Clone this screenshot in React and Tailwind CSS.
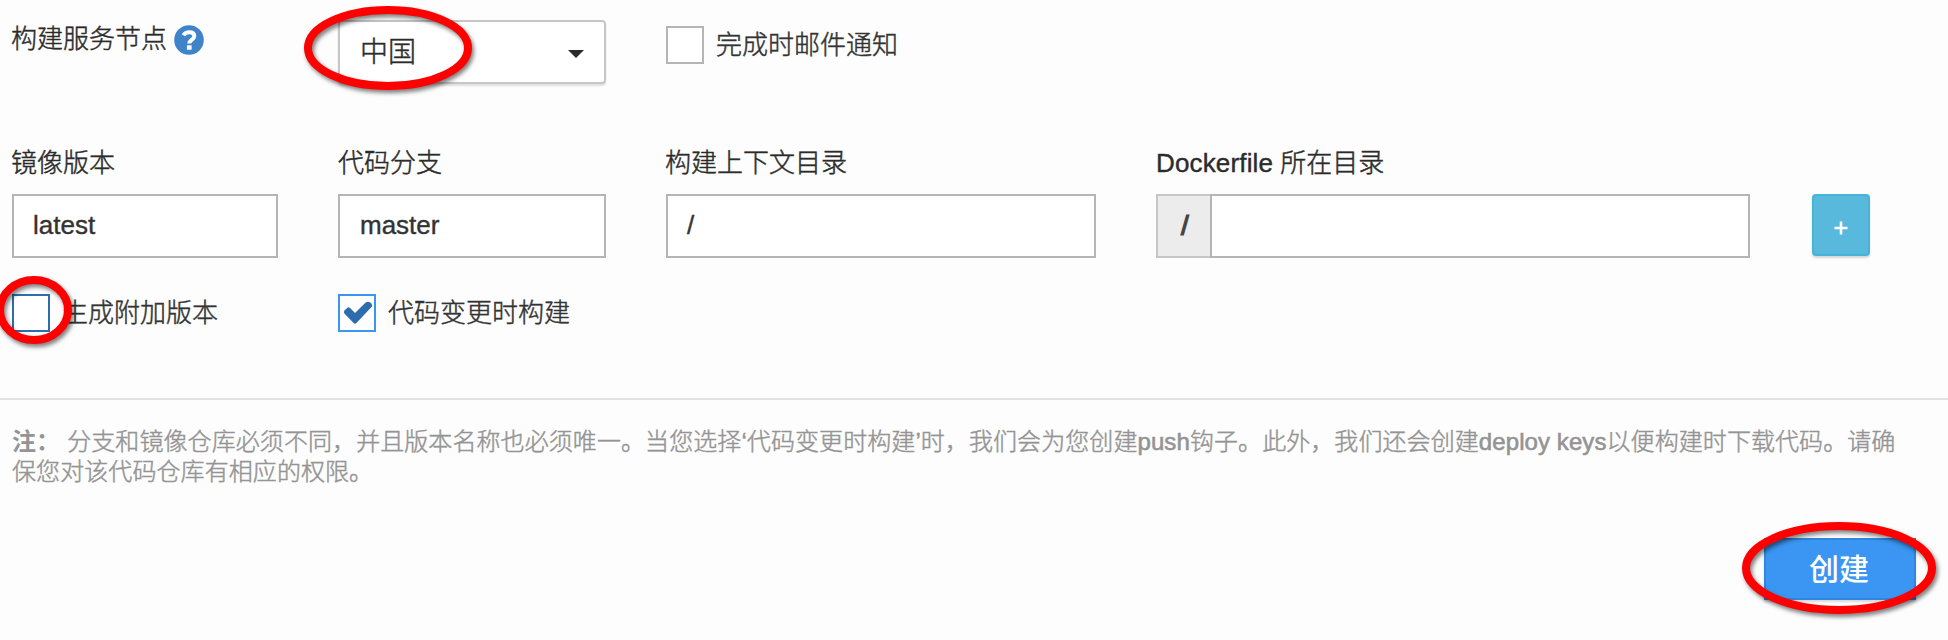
function Field({ label, className, children }) {
  return (
    <div className={className}>
      <div className="h-[37px] pt-[1px] leading-[37px] whitespace-nowrap text-[#2b2b2b]">{label}</div>
      <div className="mt-[13px]">{children}</div>
    </div>
  );
}

function TextInput({ value }) {
  return (
    <div className="flex h-16 items-center border-2 border-[#b5b5b5] bg-white pl-[19px] pb-[1px] [-webkit-text-stroke:0.4px_#333]">
      {value}
    </div>
  );
}

function Check({ border, checked, label, className = "" }) {
  return (
    <div className={`flex items-center ${className}`}>
      <div className={`flex size-[38px] shrink-0 items-center justify-center border-2 bg-white ${border}`}>
        {checked && (
          <svg width="34" height="34" viewBox="0 0 34 34">
            <path
              d="M4.4 14.6 L7.4 11.7 Q8.6 10.8 9.8 11.8 L15 17 L25.4 6.8 Q27.6 5.2 29.8 6.2 Q32.6 7.8 32 10.6 L16.4 27 Q15 28.6 13.6 27 L4.4 17.4 Q3.2 16 4.4 14.6Z"
              fill="#2d6dae"
            />
          </svg>
        )}
      </div>
      <span className="ml-[12px] pt-[1px] whitespace-nowrap text-[#333]">{label}</span>
    </div>
  );
}

function Ring({ className, w, h }) {
  return (
    <svg
      className={`absolute overflow-visible drop-shadow-[2px_3px_2px_rgba(0,0,0,0.5)] ${className}`}
      width={w}
      height={h}
    >
      <ellipse cx={w / 2} cy={h / 2} rx={w / 2 - 4} ry={h / 2 - 4} fill="none" stroke="#ff0000" strokeWidth="8" />
    </svg>
  );
}

export default function App() {
  return (
    <div className="relative h-[640px] w-[1948px] overflow-hidden bg-[#fdfdfd] font-['Liberation_Sans','Noto_Sans_CJK_SC',sans-serif] text-[26px] font-light text-[#333] [-webkit-text-stroke:0.45px]">
      <div className="flex h-[144px] items-start pl-3 pt-5">
        <div className="flex w-[326px] items-center">
          <span className="-ml-[1px] text-[#2b2b2b]">构建服务节点</span>
          <svg className="ml-[7px]" width="30" height="30" viewBox="0 0 30 30">
            <circle cx="15" cy="15" r="14.8" fill="#3f83c9" />
            <path
              d="M9.4 10.2 C10.8 8 12.8 7.3 15.4 7.3 C18.6 7.3 20.3 8.9 20.3 11 C20.3 14.8 15.2 14.8 15.2 18.6"
              fill="none"
              stroke="#fff"
              strokeWidth="4"
            />
            <rect x="12.9" y="20.2" width="4.7" height="4.6" rx="0.5" fill="#fff" />
          </svg>
        </div>
        <div className="flex h-[64px] w-[268px] items-center justify-between rounded-[4px] border-2 border-[#c6c6c6] bg-white pl-[20px] pr-[20px] shadow-[0_2px_2px_rgba(0,0,0,0.12)]">
          <span className="pt-[1px] text-[28px] text-[#2b2b2b]">中国</span>
          <svg className="mt-[4px]" width="16" height="8" viewBox="0 0 16 8">
            <path d="M0 0H16L8 8Z" fill="#2b2b2b" />
          </svg>
        </div>
        <Check className="ml-[60px] mt-[6px] h-[38px]" border="border-[#b5b5b5]" label="完成时邮件通知" />
      </div>

      <div className="flex pl-3">
        <Field label={<span className="-ml-[1px]">镜像版本</span>} className="w-[266px]">
          <TextInput value="latest" />
        </Field>
        <Field label="代码分支" className="ml-[60px] w-[268px]">
          <TextInput value={<span className="ml-[1px]">master</span>} />
        </Field>
        <Field label={<span className="-ml-[1px]">构建上下文目录</span>} className="ml-[60px] w-[430px]">
          <TextInput value="/" />
        </Field>
        <Field
          label={<><span className="tracking-[0.15px] [-webkit-text-stroke:0.4px_#2b2b2b]">Dockerfile</span> 所在目录</>}
          className="ml-[60px] w-[594px]"
        >
          <div className="flex h-16">
            <div className="flex w-[54px] items-center justify-center border-2 border-r-0 border-[#c6c6c6] bg-[#ececec] pl-[2px] text-[28px] text-[#444] [-webkit-text-stroke:1.2px_#444]">
              /
            </div>
            <div className="grow border-2 border-[#b5b5b5] bg-white" />
          </div>
        </Field>
        <div className="ml-[62px] mt-[50px] flex h-[62px] w-[58px] items-center justify-center rounded-[4px] border-2 border-[#46b3d9] bg-[#58b9dc] pt-[5px] shadow-[0_2px_2px_rgba(0,0,0,0.15)]">
          <svg width="14" height="14" viewBox="0 0 14 14">
            <path d="M7 0.5V13.5M0.5 7H13.5" stroke="#fff" strokeWidth="2.6" />
          </svg>
        </div>
      </div>

      <div className="mt-9 flex h-[38px] pl-3">
        <Check className="w-[326px]" border="border-[#2d6dae]" label="生成附加版本" />
        <Check border="border-[#3a96f0]" checked label="代码变更时构建" />
      </div>

      <div className="mt-[66px] h-[2px] bg-[#e1e1e1]" />

      <div className="mt-[27px] pl-3 text-[24px] leading-[30px] tracking-[0.08px] whitespace-nowrap text-[#949494]">
        <p>
          <span className="mr-[7px] font-bold [-webkit-text-stroke:0px]">注：</span>
          分支和镜像仓库必须不同，并且版本名称也必须唯一。当您选择‘代码变更时构建’时，我们会为您创建<span className="[-webkit-text-stroke:0.6px_#949494]">push</span>钩子。此外，我们还会创建<span className="[-webkit-text-stroke:0.6px_#949494]">deploy keys</span>以便构建时下载代码。请确
        </p>
        <p>保您对该代码仓库有相应的权限。</p>
      </div>

      <div className="mt-[51px] flex justify-end pr-8">
        <div className="flex h-[62px] w-[152px] items-center justify-center border-2 border-[#2f87e0] bg-[#3a96f2] pr-[2px] text-[30px] font-medium text-white shadow-[0_2px_2px_rgba(0,0,0,0.15)] [-webkit-text-stroke:0px]">
          创建
        </div>
      </div>

      <Ring className="left-[304px] top-[6px]" w={168} h={84} />
      <Ring className="-left-[4px] top-[276px]" w={76} h={68} />
      <Ring className="left-[1742px] top-[522px]" w={194} h={92} />
    </div>
  );
}
